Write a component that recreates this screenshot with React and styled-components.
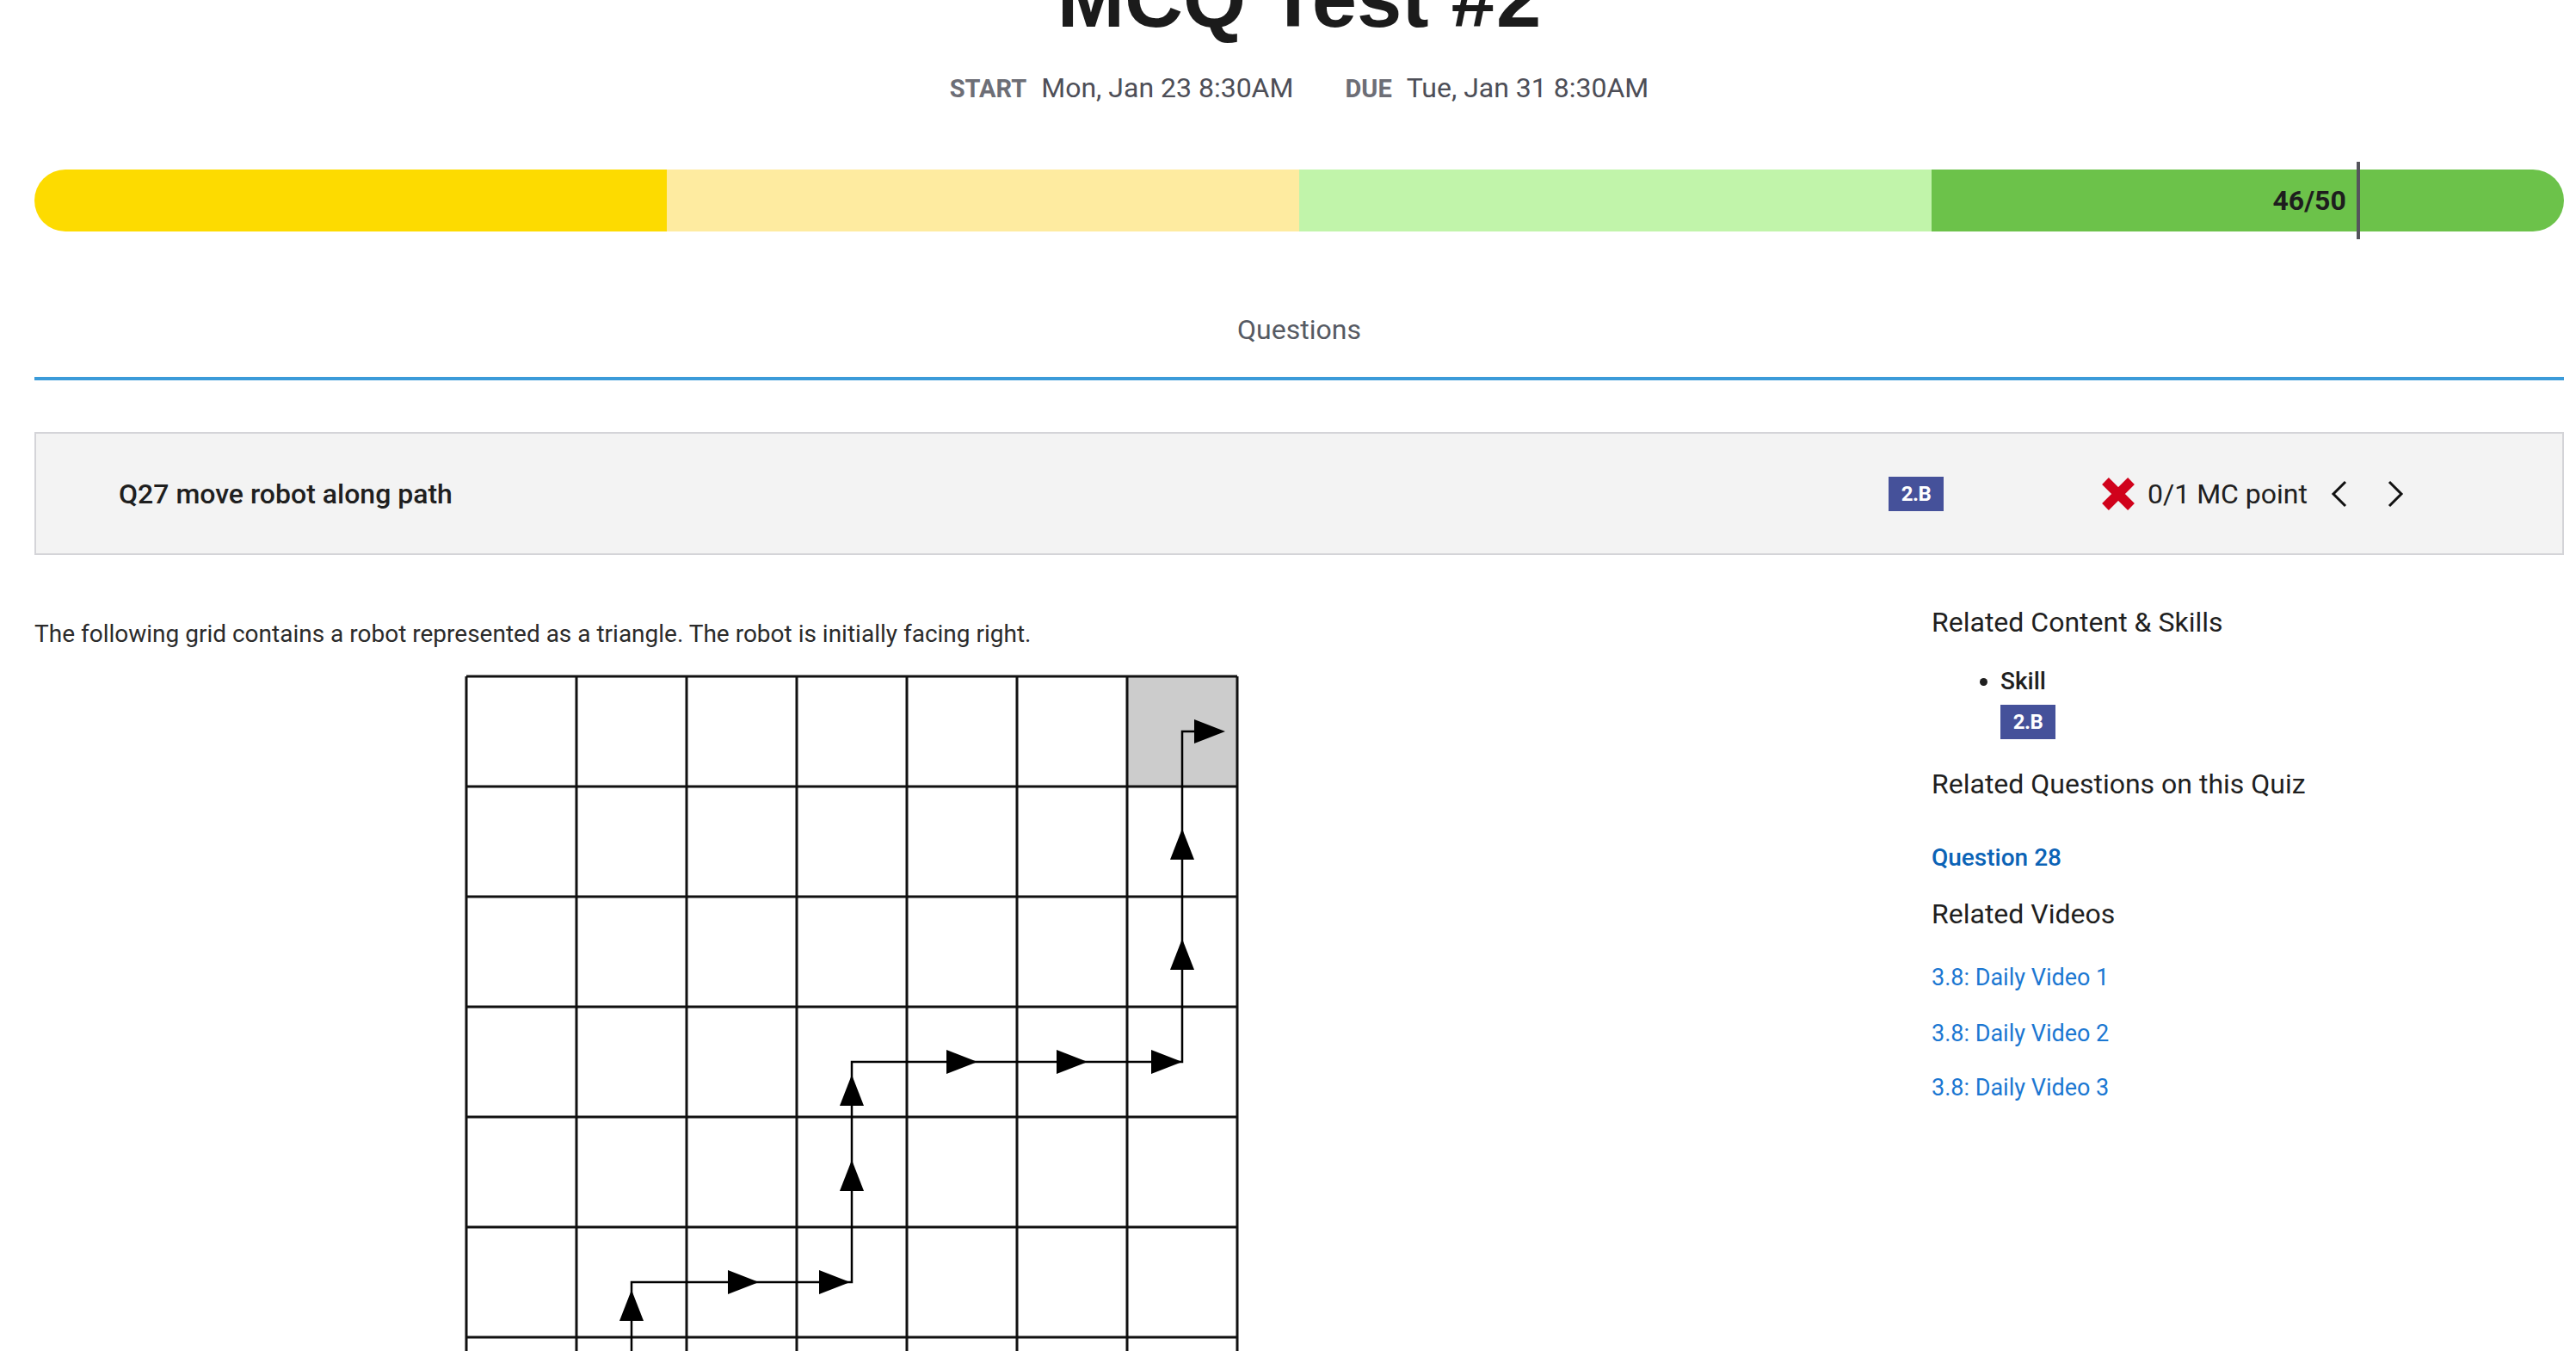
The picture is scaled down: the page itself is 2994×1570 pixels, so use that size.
import React from 'react';
import styled, { createGlobalStyle } from 'styled-components';

const COLORS = {
  text: '#1f1f1f',
  muted: '#6d6e76',
  dateText: '#4d4e57',
  tabText: '#565a63',
  tabLine: '#3b9bd9',
  boxBg: '#f3f3f3',
  boxBorder: '#d4d4d8',
  badge: '#45519a',
  wrong: '#d0021b',
  linkDark: '#0b63b6',
  link: '#1b77d2',
};

const SEGMENTS = ['#fddb00', '#feeba0', '#c1f4aa', '#6cc24a'];

const SCORE = { earned: 46, total: 50 };

const CELL = 128;
const OFF = 2;
const center = (i) => OFF + CELL / 2 + CELL * i;

// path of the robot, in cell coordinates (col, row)
const PATH = [
  [1, 6.6],
  [1, 5],
  [3, 5],
  [3, 3],
  [6, 3],
  [6, 0],
];

// arrowheads: tip point + direction
const ARROWS = [
  { x: center(1), y: 715, dir: 'up' },
  { x: 342, y: center(5), dir: 'right' },
  { x: 448, y: center(5), dir: 'right' },
  { x: center(3), y: 564, dir: 'up' },
  { x: center(3), y: 465, dir: 'up' },
  { x: 596, y: center(3), dir: 'right' },
  { x: 724, y: center(3), dir: 'right' },
  { x: 834, y: center(3), dir: 'right' },
  { x: center(6), y: 307, dir: 'up' },
  { x: center(6), y: 179, dir: 'up' },
  { x: 884, y: center(0), dir: 'right' },
];

const arrowPoints = ({ x, y, dir }) => {
  const len = 36;
  const half = 14;
  if (dir === 'up') {
    return `${x},${y} ${x - half},${y + len} ${x + half},${y + len}`;
  }
  return `${x},${y} ${x - len},${y - half} ${x - len},${y + half}`;
};

const VIDEOS = ['3.8: Daily Video 1', '3.8: Daily Video 2', '3.8: Daily Video 3'];
const VIDEO_GAPS = [29, 23, 21];

const App = () => {
  const pct = (SCORE.earned / SCORE.total) * 100;
  const pathD =
    PATH.map(([c, r], i) => `${i === 0 ? 'M' : 'L'}${center(c)} ${center(r)}`).join(' ') +
    ` H ${center(6) + 16}`;

  return (
    <>
      <GlobalStyle />
      <Page>
        <Title>MCQ Test #2</Title>
        <Dates>
          <DateItem>
            <DateLabel>Start</DateLabel>
            <DateValue>Mon, Jan 23 8:30AM</DateValue>
          </DateItem>
          <DateItem>
            <DateLabel>Due</DateLabel>
            <DateValue>Tue, Jan 31 8:30AM</DateValue>
          </DateItem>
        </Dates>

        <BarWrap>
          <Track>
            {SEGMENTS.map((c) => (
              <Segment key={c} $color={c} />
            ))}
          </Track>
          <ScoreLabel style={{ right: `calc(${100 - pct}% + 18px)` }}>
            {SCORE.earned}/{SCORE.total}
          </ScoreLabel>
          <Marker style={{ left: `calc(${pct}% - 6px)` }} />
        </BarWrap>

        <Tabs>
          <Tab>Questions</Tab>
        </Tabs>

        <QuestionBox>
          <QuestionTitle>Q27 move robot along path</QuestionTitle>
          <Badge>2.B</Badge>
          <Score>
            <svg width="40" height="40" viewBox="0 0 40 40">
              <path d="M5 5 L35 35 M35 5 L5 35" stroke={COLORS.wrong} strokeWidth="11" />
            </svg>
            <Points>0/1 MC point</Points>
          </Score>
          <NavButton aria-label="previous">
            <svg width="20" height="32" viewBox="0 0 20 32">
              <polyline points="17,2 3,16 17,30" fill="none" stroke="#111" strokeWidth="3" />
            </svg>
          </NavButton>
          <NavButton aria-label="next">
            <svg width="20" height="32" viewBox="0 0 20 32">
              <polyline points="3,2 17,16 3,30" fill="none" stroke="#111" strokeWidth="3" />
            </svg>
          </NavButton>
        </QuestionBox>

        <MainRow>
          <Content>
            <Prompt>
              The following grid contains a robot represented as a triangle. The robot is
              initially facing right.
            </Prompt>
            <Figure>
              <svg width="900" height="900" viewBox="0 0 900 900">
                <rect x={OFF + CELL * 6} y={OFF} width={CELL} height={CELL} fill="#cccccc" />
                {Array.from({ length: 8 }).map((_, i) => (
                  <g key={i} stroke="#111" strokeWidth="3">
                    <line x1={OFF + CELL * i} y1={OFF} x2={OFF + CELL * i} y2={OFF + CELL * 7} />
                    <line x1={OFF} y1={OFF + CELL * i} x2={OFF + CELL * 7} y2={OFF + CELL * i} />
                  </g>
                ))}
                <path d={pathD} fill="none" stroke="#000" strokeWidth="2.5" />
                {ARROWS.map((a, i) => (
                  <polygon key={i} points={arrowPoints(a)} fill="#000" />
                ))}
              </svg>
            </Figure>
          </Content>

          <Sidebar>
            <SideHeading>Related Content &amp; Skills</SideHeading>
            <SkillList>
              <li>Skill</li>
            </SkillList>
            <SideBadge>2.B</SideBadge>
            <SideHeading $gap={28}>Related Questions on this Quiz</SideHeading>
            <QuestionLink href="#">Question 28</QuestionLink>
            <SideHeading $gap={20}>Related Videos</SideHeading>
            {VIDEOS.map((v, i) => (
              <VideoLink key={v} href="#" $gap={VIDEO_GAPS[i]}>
                {v}
              </VideoLink>
            ))}
          </Sidebar>
        </MainRow>
      </Page>
    </>
  );
};

const GlobalStyle = createGlobalStyle`
  * { box-sizing: border-box; }
  body {
    margin: 0;
    background: #fff;
    font-family: Roboto, "Liberation Sans", sans-serif;
    color: ${COLORS.text};
  }
`;

const Page = styled.div`
  height: 1570px;
  overflow: hidden;
  padding: 0 14px 0 40px;
`;

const Title = styled.h1`
  margin: -46px 0 0;
  font: 700 94px/90px 'Liberation Sans', Arial, sans-serif;
  color: #1b1b1b;
  text-align: center;
`;

const Dates = styled.div`
  margin-top: 34px;
  display: flex;
  justify-content: center;
  gap: 60px;
  line-height: 48px;
`;

const DateItem = styled.div`
  display: flex;
  align-items: baseline;
  gap: 17px;
`;

const DateLabel = styled.span`
  font-size: 29px;
  font-weight: 700;
  text-transform: uppercase;
  color: ${COLORS.muted};
`;

const DateValue = styled.span`
  font-size: 32px;
  color: ${COLORS.dateText};
`;

const BarWrap = styled.div`
  position: relative;
  margin-top: 70px;
  height: 72px;
`;

const Track = styled.div`
  display: flex;
  height: 100%;
  border-radius: 36px;
  overflow: hidden;
`;

const Segment = styled.div`
  flex: 1;
  background: ${(p) => p.$color};
`;

const Marker = styled.div`
  position: absolute;
  top: -9px;
  bottom: -9px;
  width: 4px;
  background: #55555c;
`;

const ScoreLabel = styled.span`
  position: absolute;
  top: 0;
  line-height: 72px;
  font-size: 32px;
  font-weight: 700;
  color: #1e1e1e;
`;

const Tabs = styled.div`
  margin-top: 90px;
  display: flex;
  justify-content: center;
  border-bottom: 4px solid ${COLORS.tabLine};
`;

const Tab = styled.div`
  font-size: 32px;
  line-height: 48px;
  padding-bottom: 31px;
  color: ${COLORS.tabText};
`;

const QuestionBox = styled.div`
  margin-top: 60px;
  height: 143px;
  display: flex;
  align-items: center;
  padding: 0 184px 0 96px;
  background: ${COLORS.boxBg};
  border: 2px solid ${COLORS.boxBorder};
`;

const QuestionTitle = styled.div`
  flex: 1;
  font-size: 32px;
  font-weight: 500;
  color: ${COLORS.text};
`;

const Badge = styled.span`
  display: inline-flex;
  align-items: center;
  justify-content: center;
  width: 64px;
  height: 40px;
  background: ${COLORS.badge};
  color: #fff;
  font-size: 24px;
  font-weight: 700;
  letter-spacing: -0.5px;
`;

const Score = styled.div`
  margin-left: 183px;
  display: flex;
  align-items: center;
  gap: 14px;
`;

const Points = styled.span`
  font-size: 32px;
  color: #202020;
`;

const NavButton = styled.button`
  display: flex;
  align-items: center;
  justify-content: center;
  border: 0;
  padding: 0;
  background: transparent;
  margin-left: 27px;
  width: 20px;
  &:last-child {
    margin-left: 45px;
  }
`;

const MainRow = styled.div`
  margin-top: 54px;
  display: grid;
  grid-template-columns: 3fr 1fr;
`;

const Content = styled.div`
  padding-top: 17px;
`;

const Prompt = styled.p`
  margin: 0;
  font-size: 28px;
  line-height: 42px;
  color: #2b2b2b;
`;

const Figure = styled.div`
  margin: 26px 0 0 500px;
  line-height: 0;
`;

const Sidebar = styled.aside`
  display: flex;
  flex-direction: column;
  align-items: flex-start;
`;

const SideHeading = styled.h3`
  margin: ${(p) => p.$gap || 0}px 0 0;
  font-size: 32px;
  line-height: 48px;
  font-weight: 400;
  color: ${COLORS.text};
`;

const SkillList = styled.ul`
  margin: 24px 0 0;
  padding-left: 80px;
  font-size: 28px;
  line-height: 42px;
  font-weight: 500;
  list-style: disc;
`;

const SideBadge = styled(Badge)`
  margin: 6px 0 0 80px;
`;

const QuestionLink = styled.a`
  margin-top: 41px;
  font-size: 28px;
  line-height: 42px;
  font-weight: 500;
  color: ${COLORS.linkDark};
  text-decoration: none;
`;

const VideoLink = styled.a`
  margin-top: ${(p) => p.$gap}px;
  font-size: 27px;
  line-height: 42px;
  color: ${COLORS.link};
  text-decoration: none;
`;

export default App;
